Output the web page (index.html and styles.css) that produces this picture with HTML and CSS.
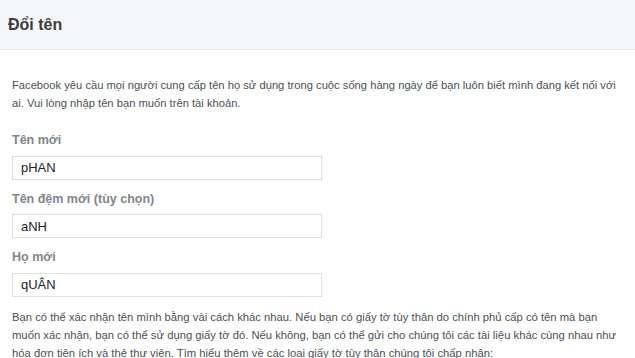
FILE: index.html
```html
<!DOCTYPE html>
<html lang="vi">

<head>
    <meta charset="UTF-8">
    <meta name="viewport" content="width=device-width, initial-scale=1.0">
    <title>Đổi tên</title>
    <link rel="stylesheet" href="styles.css">
</head>

<body>
    <div class="panel">
        <div class="panel-header">
            <h2>Đổi tên</h2>
        </div>
        <div class="panel-body">
            <p class="intro">Facebook yêu cầu mọi người cung cấp tên họ sử dụng trong cuộc sống hàng ngày để bạn luôn biết mình đang kết nối với ai. Vui lòng nhập tên bạn muốn trên tài khoản.</p>

            <div class="field">
                <label for="first">Tên mới</label>
                <input id="first" type="text" value="pHAN">
            </div>
            <div class="field">
                <label for="middle">Tên đệm mới (tùy chọn)</label>
                <input id="middle" type="text" value="aNH">
            </div>
            <div class="field">
                <label for="last">Họ mới</label>
                <input id="last" type="text" value="qUÂN">
            </div>

            <p class="note">Bạn có thể xác nhận tên mình bằng vài cách khác nhau. Nếu bạn có giấy tờ tùy thân do chính phủ cấp có tên mà bạn muốn xác nhận, bạn có thể sử dụng giấy tờ đó. Nếu không, bạn có thể gửi cho chúng tôi các tài liệu khác cùng nhau như hóa đơn tiện ích và thẻ thư viện. Tìm hiểu thêm về các loại giấy tờ tùy thân chúng tôi chấp nhận:</p>
        </div>
    </div>
</body>

</html>
```

FILE: styles.css
```css
* {
    margin: 0;
    padding: 0;
    box-sizing: border-box;
}

body {
    background: #fff;
    font-family: 'Liberation Sans', Arial, sans-serif;
    color: #4b4f56;
    overflow: hidden;
}

.panel-header {
    height: 50px;
    background: #f5f6f7;
    border-bottom: 1px solid #e5e6e9;
    display: flex;
    align-items: center;
    padding-left: 8px;
}

.panel-header h2 {
    font-size: 16px;
    font-weight: bold;
    color: #3a3d42;
}

.panel-body {
    padding: 27px 8px 0 12px;
}

.intro {
    font-size: 11.2px;
    line-height: 17.5px;
    margin-bottom: 20px;
}

.field {
    display: flex;
    flex-direction: column;
    margin-bottom: 11px;
}

.field label {
    font-size: 12.5px;
    font-weight: bold;
    color: #80858c;
    line-height: 17.5px;
    margin-bottom: 6px;
}

.field input {
    width: 310px;
    height: 24px;
    border: 1px solid #dddfe2;
    padding: 0 8px;
    font-family: inherit;
    font-size: 13px;
    color: #1d2129;
    outline: none;
}

.note {
    font-size: 11.25px;
    line-height: 18px;
    margin-top: 9px;
}
```
